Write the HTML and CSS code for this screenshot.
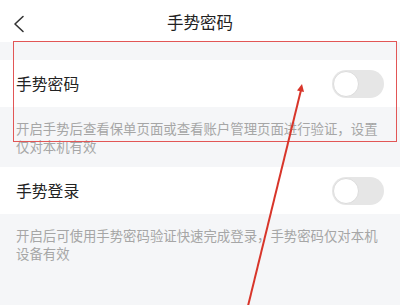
FILE: index.html
```html
<!DOCTYPE html>
<html lang="zh-CN">
<head>
    <meta charset="UTF-8">
    <meta name="viewport" content="width=device-width, initial-scale=1.0">
    <title>手势密码</title>
    <link rel="stylesheet" href="styles.css">
</head>
<body>
<div class="page">
    <div class="header">
        <svg class="back" width="14" height="18" viewBox="0 0 14 18">
            <polyline points="11,1.5 3,9 11,16.5" fill="none" stroke="#333" stroke-width="1.6" stroke-linecap="round" stroke-linejoin="round"/>
        </svg>
        <div class="title">手势密码</div>
    </div>

    <div class="spacer"></div>

    <div class="row">
        <div class="label">手势密码</div>
        <div class="switch"><div class="knob"></div></div>
    </div>
    <div class="desc">开启手势后查看保单页面或查看账户管理页面进行验证，设置仅对本机有效</div>

    <div class="row">
        <div class="label">手势登录</div>
        <div class="switch"><div class="knob"></div></div>
    </div>
    <div class="desc">开启后可使用手势密码验证快速完成登录，手势密码仅对本机设备有效</div>

    <div class="mark-box"></div>
    <svg class="mark-arrow" width="400" height="305" viewBox="0 0 400 305">
        <line x1="248" y1="306" x2="301" y2="90" stroke="#d8352a" stroke-width="2"/>
        <polygon points="302,84 304,92 297,90.5" fill="#d8352a"/>
    </svg>
</div>
</body>
</html>
```

FILE: styles.css
```css
body {
    margin: 0;
    font-family: "Noto Sans CJK SC", "Noto Sans", sans-serif;
    background: #f5f6f8;
}

.page {
    position: relative;
    width: 400px;
    height: 305px;
    overflow: hidden;
}

.header {
    position: relative;
    height: 42px;
    background: #fff;
    display: flex;
    align-items: center;
    justify-content: center;
}

.back {
    position: absolute;
    left: 12px;
    top: 15px;
}

.title {
    font-size: 16.5px;
    color: #222;
    margin-top: 2px;
}

.spacer {
    height: 18px;
}

.row {
    height: 47px;
    background: #fff;
    display: flex;
    align-items: center;
    justify-content: space-between;
    padding: 0 16px;
}

.label {
    font-size: 15.8px;
    color: #222;
}

.switch {
    width: 52px;
    height: 28px;
    border-radius: 14px;
    background: #e6e6e6;
    display: flex;
    align-items: center;
    padding-left: 1px;
    box-sizing: border-box;
}

.knob {
    width: 26px;
    height: 26px;
    border-radius: 50%;
    background: #fff;
    box-sizing: border-box;
    border: 1px solid #dcdcdc;
}

.desc {
    padding: 12px 16px 12px 16px;
    font-size: 13.4px;
    line-height: 18px;
    color: #a6a6a6;
}

.mark-box {
    position: absolute;
    left: 13px;
    top: 41px;
    width: 382px;
    height: 99px;
    border: 1.5px solid #e25656;
}

.mark-arrow {
    position: absolute;
    left: 0;
    top: 0;
}
```
